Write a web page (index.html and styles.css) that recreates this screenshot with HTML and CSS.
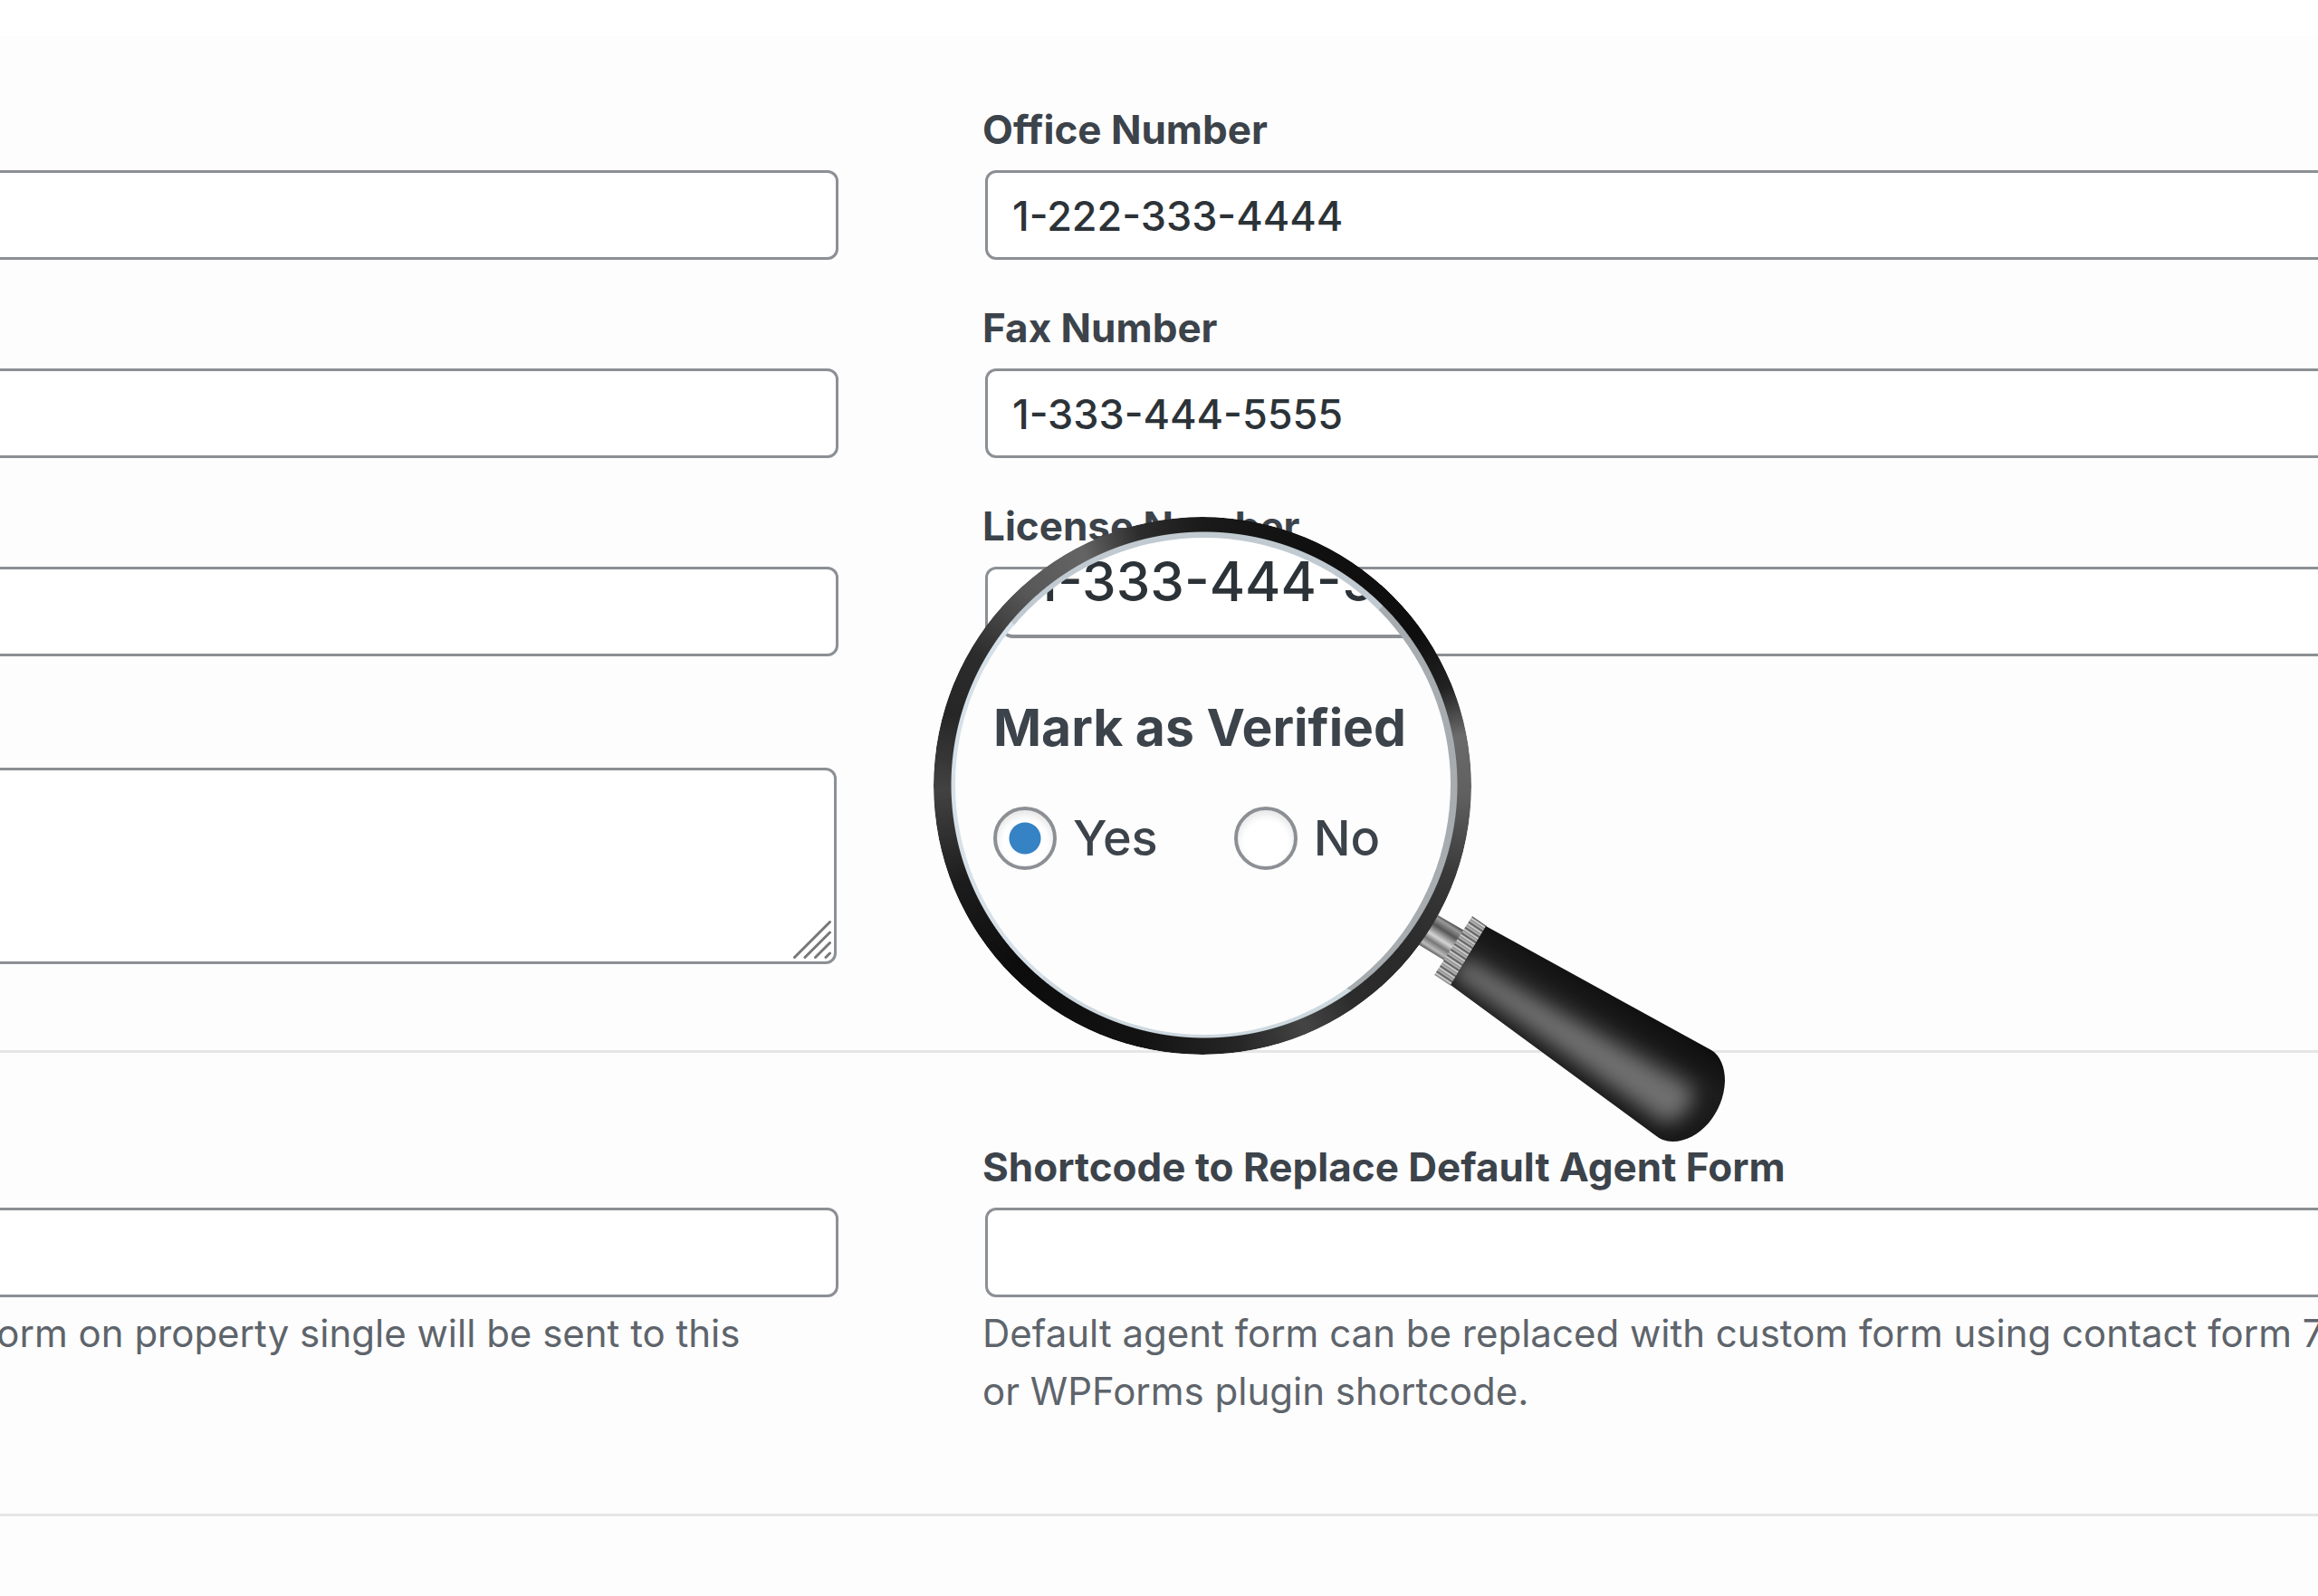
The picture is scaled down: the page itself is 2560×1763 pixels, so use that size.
FILE: index.html
```
<!DOCTYPE html>
<html lang="en">
<head>
<meta charset="utf-8">
<title>Agent Details</title>
<link rel="stylesheet" href="styles.css">
</head>
<body>
<main class="page">
  <form class="panel">
    <section class="section">
      <div class="field field--bare"><input class="input" type="text" aria-label="Email Address"></div>
      <div class="field">
        <label class="label" for="office">Office Number</label>
        <input class="input" id="office" type="text" value="1-222-333-4444">
      </div>
      <div class="field field--bare"><input class="input" type="text" aria-label="Mobile Number"></div>
      <div class="field">
        <label class="label" for="fax">Fax Number</label>
        <input class="input" id="fax" type="text" value="1-333-444-5555">
      </div>
      <div class="field field--bare"><input class="input" type="text" aria-label="WhatsApp Number"></div>
      <div class="field">
        <label class="label" for="license">License Number</label>
        <input class="input" id="license" type="text">
      </div>
      <div class="field field--bare">
        <div class="area">
          <textarea class="textarea" aria-label="Address"></textarea>
          <svg class="grip" viewBox="0 0 42 42" aria-hidden="true">
            <path d="M1.500 40.500 40.500 1.500M13 40.500 40.500 13M24.500 40.500 40.500 24.500M36 40.500 40.500 36"/>
          </svg>
        </div>
      </div>
    </section>
    <section class="section section--form">
      <div class="field field--bare">
        <input class="input" type="text" aria-label="Additional email" aria-describedby="mail-help">
        <p class="help" id="mail-help">form on property single will be sent to this</p>
      </div>
      <div class="field">
        <label class="label" for="shortcode">Shortcode to Replace Default Agent Form</label>
        <input class="input" id="shortcode" type="text" aria-describedby="code-help">
        <p class="help" id="code-help">Default agent form can be replaced with custom form using contact form 7 or WPForms plugin shortcode.</p>
      </div>
    </section>
  </form>

  <div class="magnifier">
    <div class="lens">
      <input class="lens-input" type="text" value="1-333-444-5555" aria-label="Fax Number, magnified">
      <fieldset class="choices">
        <legend class="legend">Mark as Verified</legend>
        <div class="options">
          <label class="option"><input class="radio" type="radio" name="verified" checked>Yes</label>
          <label class="option"><input class="radio" type="radio" name="verified">No</label>
        </div>
      </fieldset>
    </div>
    <div class="glass-edge"></div>
    <svg class="handle" viewBox="1031 571 880 700" aria-hidden="true">
      <defs>
        <linearGradient id="stem" gradientUnits="userSpaceOnUse" x1="1603" y1="1018" x2="1580" y2="1054">
          <stop offset="0" stop-color="#333"/><stop offset=".12" stop-color="#999"/><stop offset=".3" stop-color="#555"/><stop offset=".55" stop-color="#d4d4d4"/><stop offset=".7" stop-color="#777"/><stop offset=".85" stop-color="#bbb"/><stop offset="1" stop-color="#333"/>
        </linearGradient>
        <linearGradient id="ribs" gradientUnits="userSpaceOnUse" spreadMethod="repeat" x1="1625" y1="1012" x2="1621" y2="1018">
          <stop offset="0" stop-color="#555"/><stop offset=".3" stop-color="#ddd"/><stop offset=".5" stop-color="#888"/><stop offset=".7" stop-color="#bbb"/><stop offset="1" stop-color="#555"/>
        </linearGradient>
        <linearGradient id="grip-shade" gradientUnits="userSpaceOnUse" x1="1790" y1="1090" x2="1725" y2="1195">
          <stop offset="0" stop-color="#0c0c0c"/><stop offset=".35" stop-color="#1c1c1c"/><stop offset="1" stop-color="#161616"/>
        </linearGradient>
        <clipPath id="grip-clip"><path d="M1641 1023 1890 1160C1900 1166 1905 1179 1905 1194C1904 1229 1877 1261 1847 1261Q1836 1261 1828 1254L1602 1088Z"/></clipPath>
        <filter id="soft" x="-20%" y="-20%" width="140%" height="140%"><feGaussianBlur stdDeviation="11"/></filter>
      </defs>
      <path fill="url(#stem)" d="M1588 1011 1619 1029 1597 1062 1566 1043Z"/>
      <path fill="url(#ribs)" d="M1626 1012 1642 1023 1602 1089 1584 1077Z"/>
      <g clip-path="url(#grip-clip)">
        <path fill="url(#grip-shade)" d="M1580 1000H1911V1270H1580Z"/>
        <path fill="#707070" filter="url(#soft)" d="M1616 1056 1868 1200C1876 1212 1862 1238 1838 1241L1603 1077Z"/>
      </g>
    </svg>
    <div class="rim"></div>
  </div>
</main>
</body>
</html>
```
FILE: styles.css
```
* { box-sizing: border-box; }

body {
  margin: 0;
  background: #fdfdfd;
  color: #3c434a;
  font-family: Inter, "Liberation Sans", sans-serif;
  font-size: 42px;
  font-weight: 500;
}

.page {
  position: relative;
  min-height: 100vh;
  overflow: hidden;
  border-top: 40px solid #fff;
}

/* The two columns run past both sides of the window. */
.section {
  display: grid;
  grid-template-columns: minmax(0, 947fr) minmax(0, 1525fr);
  gap: 52px 156px;
  padding: 80px 0 95px;
  margin: 0 -50px 0 -18px;
  border-bottom: 3px solid #e6e6e6;
}

.section--form { padding: 103px 0; }

.field { display: flex; flex-direction: column; }
.field--bare { padding-top: 68px; }

.label {
  padding-top: 1px;
  margin-bottom: 23px;
  font-size: 44px;
  font-weight: 700;
  line-height: 44px;
}

.input,
.textarea {
  margin: 0 3px;
  border: 3px solid #8c8f94;
  border-radius: 12px;
  background: #fff;
  color: #2c3338;
  font: inherit;
  font-size: 45px;
}

.input { height: 99px; padding: 2px 27px 0; }

.area { position: relative; display: flex; margin: 3px 2px 0 0; }
.textarea { flex: 1; height: 217px; resize: none; }

.grip {
  position: absolute;
  right: 9px;
  bottom: 6px;
  width: 42px;
  height: 42px;
  fill: none;
  stroke: #777;
  stroke-width: 3;
  stroke-linecap: round;
}

.help {
  margin: 8px 0 0;
  color: #5e646b;
  font-weight: 400;
  line-height: 64px;
}

/* Magnifying glass that floats over the form */
.magnifier {
  position: absolute;
  left: 1031px;
  top: 531px;
  width: 880px;
  height: 700px;
}

.lens {
  width: 594px;
  height: 594px;
  padding: 4px 0 0 66px;
  background: #fdfdfd;
  clip-path: circle(284px at 298px 297px);
  overflow: hidden;
}

.lens-input {
  display: block;
  width: 600px;
  height: 130px;
  margin-left: 6px;
  padding: 4px 36px 0;
  border: 4px solid #8c8f94;
  border-radius: 16px;
  background: #fff;
  color: #2c3338;
  font: inherit;
  font-size: 60px;
}

.choices {
  margin: 65px 0 0;
  padding: 0;
  border: 0;
}

.legend { padding: 0; font-size: 57px; font-weight: 700; line-height: 68px; }

.options { display: flex; gap: 84px; margin-top: 53px; }

.option {
  display: flex;
  align-items: center;
  gap: 18px;
  font-size: 54px;
  line-height: 70px;
}

.radio {
  appearance: none;
  width: 70px;
  height: 70px;
  margin: 0;
  border: 4px solid #8c8f94;
  border-radius: 50%;
  background: #fff;
  box-shadow: inset 0 5px 8px rgba(0, 0, 0, .1);
}

.radio:checked { background: radial-gradient(circle, #3582c4 17px, #fff 18px); }

.glass-edge {
  position: absolute;
  left: 18px;
  top: 14px;
  width: 562px;
  height: 562px;
  border-style: solid;
  border-width: 9px 9px 4px 6px;
  border-color: #c0cad0 #a6acaf #cdd8df #d6e0e8;
  border-radius: 50%;
}

.handle { position: absolute; inset: 0; }

.rim {
  position: absolute;
  left: 0;
  top: 0;
  width: 594px;
  height: 594px;
  border-radius: 50%;
  background: conic-gradient(#1a1a1a, #101010 25deg, #0e0e0e 55deg, #222 68deg, #6a6a6a 79deg, #606060 92deg, #383838 110deg, #2a2a2a 130deg, #2c2c2c 145deg, #444 157deg, #262626 172deg, #121212 195deg, #0c0c0c 225deg, #1c1c1c 248deg, #424242 269deg, #262626 286deg, #2c2c2c 300deg, #585858 318deg, #646464 333deg, #2c2c2c 346deg, #1a1a1a);
  mask: radial-gradient(circle at 299px 296px, transparent 279px, #000 280px);
}
```
